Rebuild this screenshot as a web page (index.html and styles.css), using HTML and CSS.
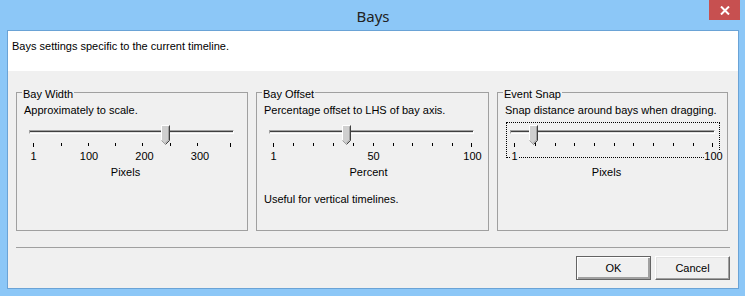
FILE: index.html
```html
<!DOCTYPE html>
<html>
<head>
<meta charset="utf-8">
<title>Bays</title>
<link rel="stylesheet" href="styles.css">
</head>
<body>
<div class="window">
    <div class="titlebar">
        <div></div>
        <div class="title">Bays</div>
        <div class="close">
            <svg width="10" height="9" viewBox="0 0 10 9">
                <path d="M1 0.5 L9 8.5 M9 0.5 L1 8.5" stroke="#fff" stroke-width="2"/>
            </svg>
        </div>
    </div>
    <div class="client">
        <div class="header">Bays settings specific to the current timeline.</div>

        <div class="groups">
            <div class="group">
                <div class="legend">Bay Width</div>
                <div class="desc">Approximately to scale.</div>
                <div class="slider">
                    <div class="track"></div>
                    <div class="tick long" style="left:4px"></div>
                    <div class="tick" style="left:32px"></div>
                    <div class="tick" style="left:59px"></div>
                    <div class="tick" style="left:86px"></div>
                    <div class="tick" style="left:113px"></div>
                    <div class="tick" style="left:141px"></div>
                    <div class="tick" style="left:168px"></div>
                    <div class="tick long" style="left:201px"></div>
                    <div class="thumb" style="left:132px">
                        <svg width="9" height="20" viewBox="0 0 9 20">
                            <path d="M0.5 15.5 V0.5 H8.5 V15.5 L4.5 19.5 Z" fill="#cfcfcf"/>
                            <path d="M0.5 15.5 V0.5 H8" stroke="#fff" fill="none"/>
                            <path d="M8.5 0.5 V15.5 L4.5 19.5" stroke="#404040" fill="none"/>
                            <path d="M7.5 1.5 V15 L4.5 18" stroke="#a0a0a0" fill="none"/>
                            <path d="M0.5 15.5 L4.5 19.5" stroke="#a0a0a0" fill="none"/>
                        </svg>
                    </div>
                </div>
                <div class="labels">
                    <span style="left:4.5px">1</span>
                    <span style="left:60px">100</span>
                    <span style="left:115.5px">200</span>
                    <span style="left:171px">300</span>
                </div>
                <div class="unit">Pixels</div>
            </div>

            <div class="group">
                <div class="legend">Bay Offset</div>
                <div class="desc">Percentage offset to LHS of bay axis.</div>
                <div class="slider">
                    <div class="track"></div>
                    <div class="tick long" style="left:4px"></div>
                    <div class="tick" style="left:24px"></div>
                    <div class="tick" style="left:44px"></div>
                    <div class="tick" style="left:64px"></div>
                    <div class="tick" style="left:84px"></div>
                    <div class="tick" style="left:104px"></div>
                    <div class="tick" style="left:124px"></div>
                    <div class="tick" style="left:143px"></div>
                    <div class="tick" style="left:163px"></div>
                    <div class="tick" style="left:183px"></div>
                    <div class="tick long" style="left:202px"></div>
                    <div class="thumb" style="left:73px">
                        <svg width="9" height="20" viewBox="0 0 9 20">
                            <path d="M0.5 15.5 V0.5 H8.5 V15.5 L4.5 19.5 Z" fill="#cfcfcf"/>
                            <path d="M0.5 15.5 V0.5 H8" stroke="#fff" fill="none"/>
                            <path d="M8.5 0.5 V15.5 L4.5 19.5" stroke="#404040" fill="none"/>
                            <path d="M7.5 1.5 V15 L4.5 18" stroke="#a0a0a0" fill="none"/>
                            <path d="M0.5 15.5 L4.5 19.5" stroke="#a0a0a0" fill="none"/>
                        </svg>
                    </div>
                </div>
                <div class="labels">
                    <span style="left:4.5px">1</span>
                    <span style="left:104.5px">50</span>
                    <span style="left:203.5px">100</span>
                </div>
                <div class="unit wide">Percent</div>
                <div class="note">Useful for vertical timelines.</div>
            </div>

            <div class="group">
                <div class="legend">Event Snap</div>
                <div class="desc">Snap distance around bays when dragging.</div>
                <div class="focus"></div>
                <div class="slider">
                    <div class="track"></div>
                    <div class="tick long" style="left:4px"></div>
                    <div class="tick" style="left:25px"></div>
                    <div class="tick" style="left:45px"></div>
                    <div class="tick" style="left:64px"></div>
                    <div class="tick" style="left:84px"></div>
                    <div class="tick" style="left:104px"></div>
                    <div class="tick" style="left:123px"></div>
                    <div class="tick" style="left:143px"></div>
                    <div class="tick" style="left:163px"></div>
                    <div class="tick" style="left:183px"></div>
                    <div class="tick long" style="left:202px"></div>
                    <div class="thumb" style="left:19px">
                        <svg width="9" height="20" viewBox="0 0 9 20">
                            <path d="M0.5 15.5 V0.5 H8.5 V15.5 L4.5 19.5 Z" fill="#cfcfcf"/>
                            <path d="M0.5 15.5 V0.5 H8" stroke="#fff" fill="none"/>
                            <path d="M8.5 0.5 V15.5 L4.5 19.5" stroke="#404040" fill="none"/>
                            <path d="M7.5 1.5 V15 L4.5 18" stroke="#a0a0a0" fill="none"/>
                            <path d="M0.5 15.5 L4.5 19.5" stroke="#a0a0a0" fill="none"/>
                        </svg>
                    </div>
                </div>
                <div class="labels">
                    <span style="left:4.5px">1</span>
                    <span style="left:203.5px">100</span>
                </div>
                <div class="unit">Pixels</div>
            </div>
        </div>

        <div class="separator"></div>

        <div class="buttons">
            <button type="button" class="btn default">OK</button>
            <button type="button" class="btn">Cancel</button>
        </div>
    </div>
</div>
</body>
</html>
```

FILE: styles.css
```css
body {
    margin: 0;
    font-family: "Liberation Sans", Arial, sans-serif;
    font-size: 11px;
    line-height: 13px;
    color: #000;
}

.window {
    width: 745px;
    height: 296px;
    box-sizing: border-box;
    background-color: #8cc7f7;
    padding: 0 6px 7px 7px;
    display: flex;
    flex-direction: column;
}

.titlebar {
    height: 30px;
    display: grid;
    grid-template-columns: 1fr auto 1fr;
}

.title {
    font-family: "Noto Sans", "Open Sans", sans-serif;
    font-size: 15px;
    line-height: 20px;
    color: #222;
    padding-top: 6px;
}

.close {
    justify-self: end;
    width: 31px;
    height: 20px;
    margin-right: -1px;
    background-color: #c75050;
    display: flex;
    align-items: center;
    justify-content: center;
}

.client {
    flex: 1;
    background-color: #f0f0f0;
    border: 1px solid #6aa3d6;
}

.header {
    height: 40px;
    box-sizing: border-box;
    background-color: #fff;
    padding: 9px 4px 0;
}

.groups {
    display: grid;
    grid-template-columns: 232px 233px 231px;
    gap: 8px;
    margin: 21px 0 0 8px;
}

.group {
    position: relative;
    height: 139px;
    box-sizing: border-box;
    border: 1px solid #a0a0a0;
}

.legend {
    width: fit-content;
    height: 13px;
    margin: -5px 0 0 5px;
    padding: 0 1px;
    background-color: #f0f0f0;
}

.desc {
    margin: 3px 0 0 7px;
    white-space: nowrap;
}

.slider {
    position: relative;
    width: 205px;
    height: 23px;
    margin: 8px 0 0 12px;
}

.track {
    position: absolute;
    left: 0;
    right: 0;
    top: 5px;
    height: 2px;
    border: 1px solid;
    border-color: #a0a0a0 #fff #fff #a0a0a0;
    background: linear-gradient(#404040 50%, #e3e3e3 50%);
}

.tick {
    position: absolute;
    top: 18px;
    width: 1px;
    height: 3px;
    background-color: #000;
}

.tick.long {
    height: 4px;
}

.thumb {
    position: absolute;
    top: 0;
    width: 9px;
    height: 20px;
}

.thumb svg {
    display: block;
}

.labels {
    position: relative;
    height: 13px;
    margin: 2px 0 0 12px;
    width: 205px;
}

.labels span {
    position: absolute;
    top: 0;
    transform: translateX(-50%);
    background-color: #f0f0f0;
    padding: 0 1px;
}

.unit {
    width: 205px;
    margin: 3px 0 0 12px;
    padding-right: 12px;
    box-sizing: border-box;
    text-align: center;
}

.unit.wide {
    padding-right: 6px;
}

.note {
    margin: 14px 0 0 7px;
}

.focus {
    position: absolute;
    left: 8px;
    top: 29px;
    width: 214px;
    height: 36px;
    box-sizing: border-box;
    border: 1px dotted #000;
}

.separator {
    height: 1px;
    background-color: #a0a0a0;
    margin: 16px 8px 0 8px;
}

.buttons {
    display: flex;
    justify-content: flex-end;
    gap: 4px;
    margin-top: 8px;
    padding-right: 8px;
}

.btn {
    width: 75px;
    height: 24px;
    box-sizing: border-box;
    padding: 0;
    font-family: "Liberation Sans", Arial, sans-serif;
    font-size: 11px;
    color: #000;
    background-color: #f0f0f0;
    border: 1px solid;
    border-color: #fff #696969 #696969 #fff;
    box-shadow: inset -1px -1px #a0a0a0, inset 1px 1px #e3e3e3;
}

.btn.default {
    border-color: #646464;
    box-shadow: inset 1px 1px #fff, inset -2px -2px #a0a0a0;
}
```
